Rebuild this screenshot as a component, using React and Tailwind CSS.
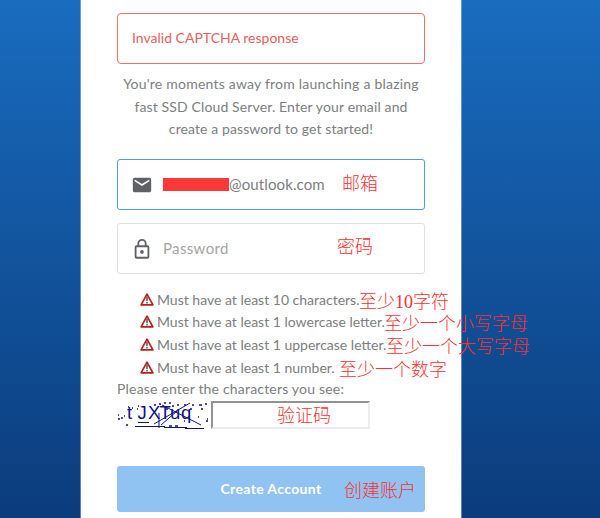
const rules = [
  'Must have at least 10 characters.',
  'Must have at least 1 lowercase letter.',
  'Must have at least 1 uppercase letter.',
  'Must have at least 1 number.',
];

function WarningIcon() {
  return (
    <svg className="mr-[3px] h-[13px] w-[14px] shrink-0" viewBox="0 0 14 13">
      <path d="M7 1.2 12.9 11.8H1.1Z" fill="#fff" stroke="#bd1d1c" strokeWidth="1.7" strokeLinejoin="round" />
      <path d="M7 3.500V8.200M7 9V10.600" stroke="#555" strokeWidth="1.500" />
    </svg>
  );
}

function MailIcon() {
  return (
    <svg className="h-[22px] w-[22px]" viewBox="0 0 24 24" fill="#5f6167">
      <path d="M20 4H4c-1.1 0-2 .9-2 2v12c0 1.1.9 2 2 2h16c1.100 0 2-.9 2-2V6c0-1.100-.9-2-2-2zm0 4-8 5-8-5V6l8 5 8-5v2z" />
    </svg>
  );
}

function LockIcon() {
  return (
    <svg className="h-[22px] w-[22px]" viewBox="0 0 24 24" fill="none" stroke="#5f6167" strokeWidth="2">
      <rect x="5" y="9" width="14" height="12.500" rx="1" />
      <path d="M8 9V6a4 4 0 0 1 8 0v3" />
      <circle cx="12" cy="15.200" r="2" fill="#5f6167" stroke="none" />
    </svg>
  );
}

function Captcha() {
  return (
    <svg className="h-[30px] w-[92px]" viewBox="0 0 92 30" fill="none" stroke="#10108a">
      <text
        x="10 20.500 31 42.500 53 64"
        y="18"
        fill="#10108a"
        stroke="none"
        fontFamily="'Liberation Sans', sans-serif"
        fontSize="18.500"
      >
        tJXTuq
      </text>
      <path d="M18 25.500H48M47 26.500H70M68 27.500H87M21 21.500H32M37 23 73 2M45 4 84 24M42 12V27M44 24 60 10" strokeWidth="1" />
      <path d="M1 14h1M4 17h2M1 18h2M7 15h1M11 6h1M15 7h1M21 5h1M20 8h1M37 4h2M42 3h2M47 2h2M52 2h2M55 5h2M60 4h2M67 4h2M75 4h2M73 8h2M82 4h3M88 3h2M84 8h2M81 16h1M89 20h2M90 18h1M9 24h2M52 25h3M58 25h3M67 20h1M49 8h2" strokeWidth="1.500" />
    </svg>
  );
}

function Note({ className, children }) {
  return (
    <span className={`absolute whitespace-nowrap font-['Liberation_Serif','Noto_Sans_CJK_SC',serif] text-[18px] leading-[22px] font-light text-[#fb3030] ${className}`}>
      {children}
    </span>
  );
}

export default function App() {
  return (
    <div className="relative h-[518px] w-[600px] overflow-hidden bg-linear-to-b from-[#196cbf] to-[#0b3c7c] font-['Lato',sans-serif] text-[14px] text-[#7c7e81]">
      <main className="ml-[80px] h-full w-[382px] border-x border-white/35 bg-white bg-clip-padding px-9 pt-[13px]">
        <div className="flex h-[51px] items-center rounded-[4px] border border-[#f56c6c] pb-[2px] pl-[14px] text-[#ea6060]">
          <span>Invalid CAPTCHA response</span>
        </div>
        <div className="mt-[9px] h-[68px] text-center leading-[22.500px] whitespace-nowrap">
          <p><span className="tracking-[0.220px]">You're moments away from launching a blazing</span></p>
          <p><span className="tracking-[0.130px]">fast SSD Cloud Server. Enter your email and</span></p>
          <p><span className="tracking-[0.1px]">create a password to get started!</span></p>
        </div>
        <div className="mt-[18px] flex h-[51px] items-center rounded-[3px] border border-[#4a9fe8] pl-[13px]">
          <MailIcon />
          <span className="ml-[10px] h-[13px] w-[66px] bg-[#fd3838]" />
          <span className="text-[15px] tracking-[0.120px]">@outlook.com</span>
        </div>
        <div className="mt-[13px] flex h-[51px] items-center rounded-[3px] border border-[#e0e0e0] pl-[13px]">
          <LockIcon />
          <span className="ml-[10px] text-[15px] tracking-[0.350px] text-[#a4a4a4]">Password</span>
        </div>
        <ul className="mt-[14px] ml-[23px] whitespace-nowrap">
          {rules.map((text) => (
            <li key={text} className="flex h-[22.600px] items-center">
              <WarningIcon />
              <span>{text}</span>
            </li>
          ))}
        </ul>
        <p className="h-[23px] leading-[22px]">
          <span className="tracking-[0.190px]">Please enter the characters you see:</span>
        </p>
        <div className="flex h-[30px]">
          <Captcha />
          <div className="ml-[2px] h-[28px] w-[159px] border-2 border-t-[#929292] border-r-[#ececec] border-b-[#ececec] border-l-[#929292]" />
        </div>
        <button className="mt-[35px] flex h-[46px] w-[308px] items-center justify-center rounded-[3px] bg-[#90c3f1] pb-[2px] font-bold text-white">
          <span className="tracking-[0.360px]">Create Account</span>
        </button>
      </main>
      <Note className="top-[173px] left-[342px]">邮箱</Note>
      <Note className="top-[236px] left-[337px]">密码</Note>
      <Note className="top-[291px] left-[359px]">至少10字符</Note>
      <Note className="top-[313px] left-[384px]">至少一个小写字母</Note>
      <Note className="top-[336px] left-[386px]">至少一个大写字母</Note>
      <Note className="top-[359px] left-[339px]">至少一个数字</Note>
      <Note className="top-[405px] left-[277px]">验证码</Note>
      <Note className="top-[480px] left-[344px]">创建账户</Note>
    </div>
  );
}
